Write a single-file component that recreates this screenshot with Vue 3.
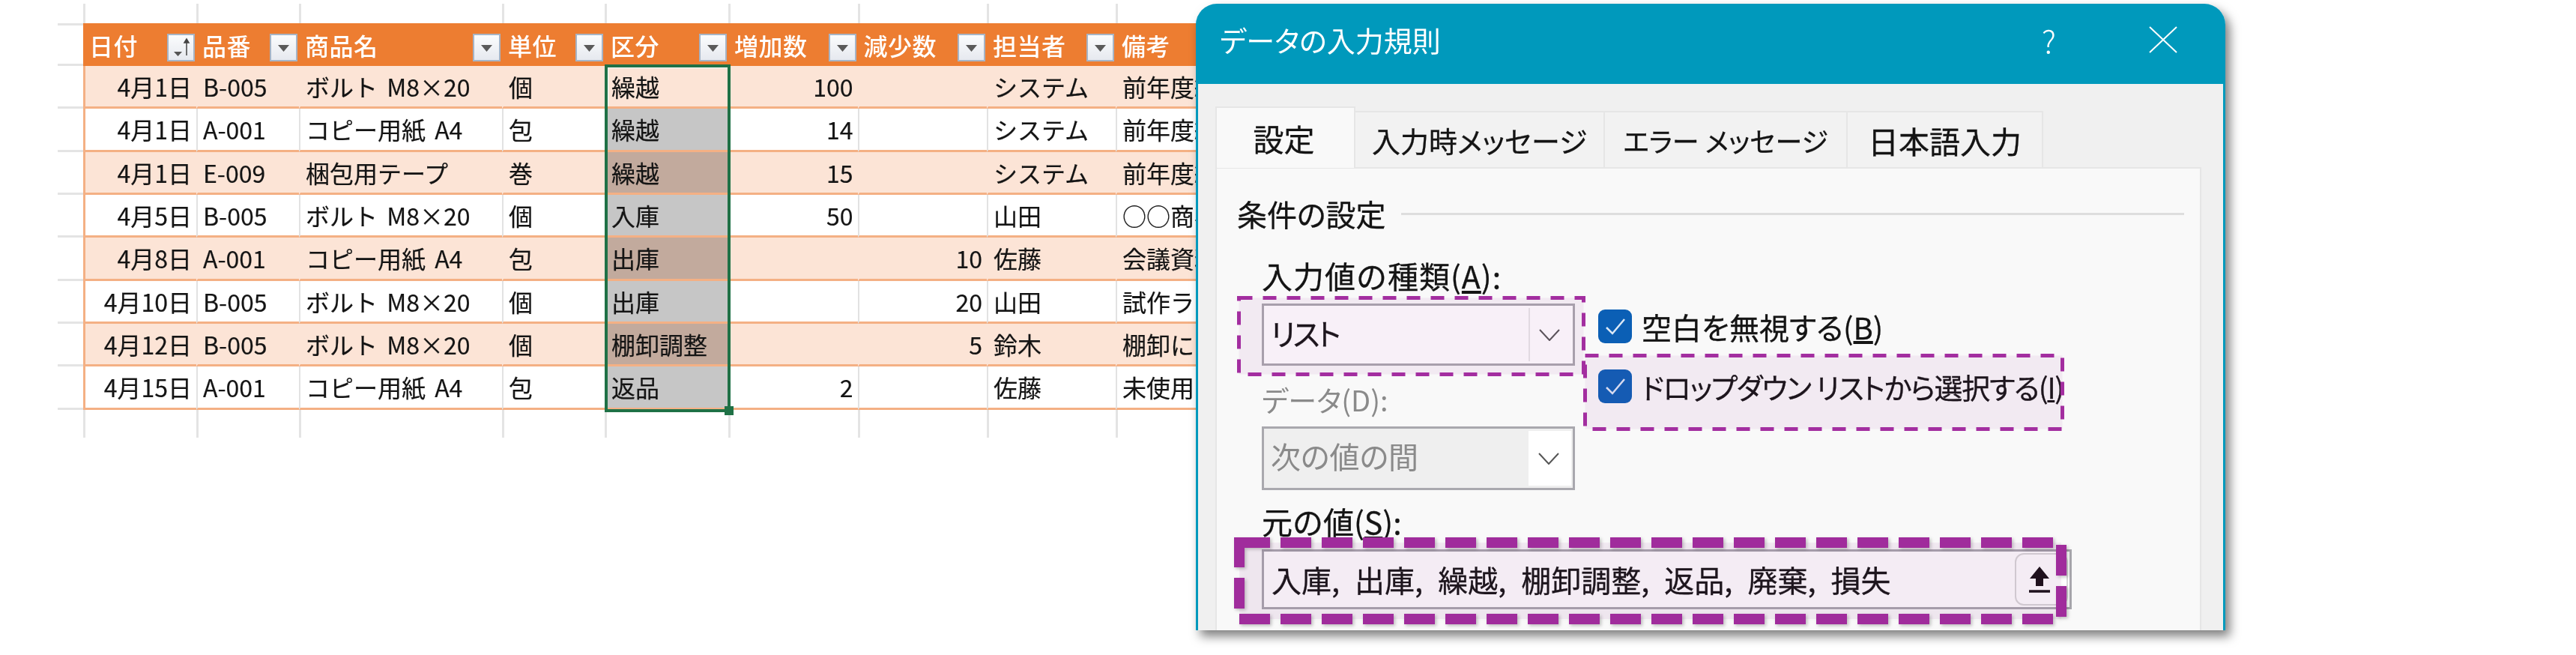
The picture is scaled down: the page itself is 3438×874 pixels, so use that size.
<template>
  <div class="page">
    <!-- シート -->
    <div class="sheet">
      <div class="grid-row stub">
        <div></div>
        <div v-for="n in 9" :key="n" class="stub-cell"></div>
      </div>

      <div class="table">
        <div class="grid-row head-row">
          <div class="row-head"></div>
          <div v-for="(h, i) in headers" :key="h" class="head-cell">
            <span>{{ h }}</span>
            <span v-if="i < 8" class="filter-btn">
              <svg v-if="i === 0" width="33" height="33" viewBox="0 0 33 33">
                <path d="M7 22h11l-5.500 6z" fill="#555" />
                <path d="M24 27V6M21 10l3-5 3 5z" stroke="#444" stroke-width="1.500" fill="#444" />
              </svg>
              <svg v-else width="33" height="33" viewBox="0 0 33 33">
                <path d="M9 13h15l-7.500 9z" fill="#5a5a5a" />
              </svg>
            </span>
          </div>
        </div>

        <div v-for="(r, i) in rows" :key="i" class="grid-row data-row" :class="{ odd: i % 2 === 0 }">
          <div class="row-head"></div>
          <div class="cell right">{{ r.date }}</div>
          <div class="cell">{{ r.code }}</div>
          <div class="cell">{{ r.name }}</div>
          <div class="cell">{{ r.unit }}</div>
          <div class="cell kubun" :class="{ active: i === 0 }">{{ r.kind }}</div>
          <div class="cell right">{{ r.inc }}</div>
          <div class="cell right">{{ r.dec }}</div>
          <div class="cell">{{ r.staff }}</div>
          <div class="cell">{{ r.note }}</div>
        </div>

        <!-- 選択範囲 -->
        <div class="selection"><i class="handle"></i></div>
      </div>

      <div class="grid-row stub bottom">
        <div></div>
        <div v-for="n in 9" :key="n" class="stub-cell"></div>
      </div>
    </div>

    <!-- ダイアログ -->
    <div class="dialog">
      <div class="title-bar">
        <span class="title">データの入力規則</span>
        <span class="help">?</span>
        <svg class="close" width="38" height="36" viewBox="0 0 38 36">
          <path d="M1 1l36 34M37 1L1 35" stroke="#fff" stroke-width="2" fill="none" />
        </svg>
      </div>

      <div class="dlg-body">
        <div class="tabs">
          <div class="tab active">設定</div>
          <div class="tab t2">入力時メッセージ</div>
          <div class="tab t3">エラー メッセージ</div>
          <div class="tab t4">日本語入力</div>
        </div>

        <div class="panel">
          <div class="legend"><span>条件の設定</span><i></i></div>

          <div class="cond">
            <div class="columns">
              <div class="left-col">
                <div class="label wide">入力値の種類(<u>A</u>):</div>
                <div class="combo first">
                  <span class="combo-text list-text">リスト</span>
                  <span class="combo-arrow">
                    <svg width="28" height="16" viewBox="0 0 28 16"><path d="M1 1l13 14L27 1" stroke="#555" stroke-width="2" fill="none" /></svg>
                  </span>
                  <svg class="mark" width="465" height="107" viewBox="0 0 465 107">
                    <rect x="2.500" y="2.500" width="460" height="102" class="mark-thin" />
                  </svg>
                </div>

                <div class="label gray data-label">データ(D):</div>
                <div class="combo disabled">
                  <span class="combo-text">次の値の間</span>
                  <span class="combo-arrow">
                    <svg width="28" height="16" viewBox="0 0 28 16"><path d="M1 1l13 14L27 1" stroke="#555" stroke-width="2" fill="none" /></svg>
                  </span>
                </div>
              </div>

              <div class="right-col">
                <label class="check first-check">
                  <span class="box"><svg width="28" height="24" viewBox="0 0 28 24"><path d="M2 13l8 8L26 2" stroke="#dbe8f6" stroke-width="2.500" fill="none" /></svg></span>
                  <span>空白を無視する(<u>B</u>)</span>
                </label>
                <label class="check second-check">
                  <span class="box"><svg width="28" height="24" viewBox="0 0 28 24"><path d="M2 13l8 8L26 2" stroke="#dbe8f6" stroke-width="2.500" fill="none" /></svg></span>
                  <span>ドロップダウン リストから選択する(<u>I</u>)</span>
                  <svg class="mark" width="642" height="103" viewBox="0 0 642 103">
                    <rect x="2.500" y="2.500" width="637" height="98" class="mark-thin" />
                  </svg>
                </label>
              </div>
            </div>

            <div class="label source-label">元の値(<u>S</u>):</div>
            <div class="source">
              <span class="source-text">入庫, 出庫, 繰越, 棚卸調整, 返品, 廃棄, 損失</span>
              <span class="ref-btn">
                <svg width="30" height="36" viewBox="0 0 30 36">
                  <path d="M15 1L28 17H20V27H10V17H2z" fill="#161014" />
                  <path d="M1 34h28" stroke="#161014" stroke-width="3.500" />
                </svg>
              </span>
              <svg class="mark thick" width="1111" height="116" viewBox="0 0 1111 116">
                <rect x="7" y="7" width="1097" height="102" class="mark-thick" />
              </svg>
            </div>
          </div>
        </div>
      </div>
    </div>
  </div>
</template>

<script setup>
const headers = ['日付', '品番', '商品名', '単位', '区分', '増加数', '減少数', '担当者', '備考']

const rows = [
  { date: '4月1日', code: 'B-005', name: 'ボルト M8×20', unit: '個', kind: '繰越', inc: '100', dec: '', staff: 'システム', note: '前年度繰越' },
  { date: '4月1日', code: 'A-001', name: 'コピー用紙 A4', unit: '包', kind: '繰越', inc: '14', dec: '', staff: 'システム', note: '前年度繰越' },
  { date: '4月1日', code: 'E-009', name: '梱包用テープ', unit: '巻', kind: '繰越', inc: '15', dec: '', staff: 'システム', note: '前年度繰越' },
  { date: '4月5日', code: 'B-005', name: 'ボルト M8×20', unit: '個', kind: '入庫', inc: '50', dec: '', staff: '山田', note: '○○商事' },
  { date: '4月8日', code: 'A-001', name: 'コピー用紙 A4', unit: '包', kind: '出庫', inc: '', dec: '10', staff: '佐藤', note: '会議資料' },
  { date: '4月10日', code: 'B-005', name: 'ボルト M8×20', unit: '個', kind: '出庫', inc: '', dec: '20', staff: '山田', note: '試作ライン' },
  { date: '4月12日', code: 'B-005', name: 'ボルト M8×20', unit: '個', kind: '棚卸調整', inc: '', dec: '5', staff: '鈴木', note: '棚卸により' },
  { date: '4月15日', code: 'A-001', name: 'コピー用紙 A4', unit: '包', kind: '返品', inc: '2', dec: '', staff: '佐藤', note: '未使用品' }
]
</script>

<style>
html,
body {
  margin: 0;
  background: #fff;
}
</style>

<style scoped>
* {
  box-sizing: border-box;
}

.page {
  position: relative;
  width: 3438px;
  height: 874px;
  overflow: hidden;
  background: #fff;
  color: #141414;
  font-family: 'Noto Sans CJK JP', 'Noto Sans', sans-serif;
  filter: blur(0.5px);
}

/* シート */
.sheet {
  padding: 5px 0 0 77px;
}

.grid-row {
  display: grid;
  grid-template-columns: 34px 151px 137px 271px 137px 165px 172.5px 172.5px 172px 300px;
}

.stub {
  height: 26px;
}

.stub.bottom {
  height: 37px;
}

.stub-cell {
  border-left: 3px solid #e4e4e4;
}

.table {
  position: relative;
}

.row-head {
  border-bottom: 3px solid #e4e4e4;
}

.head-row {
  height: 57px;
}

.head-row .row-head {
  border-top: 3px solid #e4e4e4;
}

.head-cell {
  display: flex;
  align-items: center;
  justify-content: space-between;
  padding: 0 2px 0 8px;
  background: #ed7d31;
  color: #fff;
  font-size: 32px;
  font-weight: 500;
  letter-spacing: 0.5px;
  white-space: nowrap;
  overflow: hidden;
}

.filter-btn {
  display: flex;
  align-items: center;
  justify-content: center;
  width: 37px;
  height: 37px;
  margin-top: 8px;
  background: linear-gradient(#fbfcfd, #e6e9ef);
  border: 2px solid #a6b4c6;
}

.data-row {
  height: 57.33px;
}

.cell {
  display: flex;
  align-items: center;
  padding: 0 6px 0 7px;
  font-size: 32px;
  line-height: 1;
  word-spacing: 5px;
  -webkit-text-stroke: 0.2px;
  white-space: nowrap;
  overflow: hidden;
  border-left: 2px solid #e2e2e2;
  border-bottom: 3px solid #f4b084;
  background: #fff;
}

.cell.right {
  justify-content: flex-end;
}

.cell:nth-child(2) {
  border-left: 3px solid #f4b084;
}

.odd .cell {
  background: #fce4d6;
  border-left-color: #fce4d6;
}

.odd .cell:nth-child(2) {
  border-left-color: #f4b084;
}

.cell.kubun {
  background: #c6c6c6;
}

.odd .cell.kubun {
  background: #c2aa9d;
}

.odd .cell.kubun.active {
  background: #fce4d6;
  box-shadow: inset 3px 3px 0 #fff;
}

.selection {
  position: absolute;
  left: 730px;
  top: 55px;
  width: 168px;
  height: 464px;
  border: 4px solid #1f7146;
  pointer-events: none;
}

.handle {
  position: absolute;
  right: -8px;
  bottom: -8px;
  width: 12px;
  height: 12px;
  background: #1f7146;
}

/* ダイアログ */
.dialog {
  position: absolute;
  left: 1596px;
  top: 5px;
  width: 1374px;
  height: 836px;
  display: flex;
  flex-direction: column;
  border-radius: 28px 28px 0 0;
  box-shadow: 6px 8px 14px rgba(0, 0, 0, 0.5);
  font-feature-settings: 'palt';
  -webkit-text-stroke: 0.3px;
}

.title-bar {
  display: flex;
  align-items: center;
  height: 107px;
  padding: 0 64px 12px 32px;
  background: #0099bc;
  border-radius: 28px 28px 0 0;
  color: #fff;
}

.title {
  flex: 1;
  font-size: 38px;
  font-weight: 400;
  -webkit-text-stroke: 0;
}

.help {
  margin-right: 124px;
  font-size: 42px;
  font-weight: 300;
  -webkit-text-stroke: 0;
}

.dlg-body {
  flex: 1;
  display: flex;
  flex-direction: column;
  padding-top: 30px;
  background: #f0f0f0;
  border-left: 3px solid #0099bc;
  border-right: 3px solid #0099bc;
}

.tabs {
  display: flex;
  align-items: flex-end;
  height: 81px;
  padding-left: 23px;
}

.tab {
  display: flex;
  align-items: center;
  justify-content: center;
  height: 75px;
  background: #f2f2f2;
  border: 2px solid #e6e6e6;
  border-bottom: none;
  border-left: none;
  font-size: 38px;
  white-space: nowrap;
}

.tab.active {
  width: 187px;
  height: 82px;
  margin-bottom: -1px;
  padding-right: 4px;
  background: #f9f9f9;
  border-left: 2px solid #e6e6e6;
  position: relative;
  z-index: 1;
  font-size: 41px;
}

.t2 {
  width: 333px;
}

.t3 {
  width: 324px;
  font-size: 36px;
}

.t4 {
  width: 261px;
  font-size: 41px;
}

.panel {
  flex: 1;
  width: 1316px;
  margin-left: 23px;
  padding: 40px 0 0 27px;
  background: #f9f9f9;
  border: 2px solid #e6e6e6;
  border-bottom: none;
}

.legend {
  display: flex;
  align-items: center;
  gap: 20px;
  height: 40px;
  margin-right: 21px;
  font-size: 40px;
}

.legend i {
  flex: 1;
  height: 3px;
  background: #dedede;
}

.cond {
  margin-left: 33px;
  margin-top: 40px;
}

.columns {
  display: flex;
  gap: 31px;
}

.left-col {
  width: 418px;
}

.label {
  height: 45px;
  font-size: 38px;
  line-height: 45px;
  white-space: nowrap;
}

.label.wide {
  font-size: 41px;
  letter-spacing: 1px;
  font-feature-settings: normal;
}

.label.gray {
  color: #8a8a8a;
  -webkit-text-stroke: 0;
}

.data-label {
  margin-top: 22px;
}

.source-label {
  margin-top: 19px;
  font-size: 41px;
  font-feature-settings: normal;
}

.combo {
  position: relative;
  display: flex;
  height: 83px;
  margin-top: 15px;
  background: #fff;
  border: 3px solid #a9a8ae;
}

.combo.disabled {
  height: 85px;
  margin-top: 14px;
  background: #efefef;
}

.combo-text {
  flex: 1;
  padding-left: 9px;
  font-size: 40px;
  line-height: 72px;
}

.list-text {
  letter-spacing: -3px;
}

.disabled .combo-text {
  color: #8a8a8a;
  -webkit-text-stroke: 0;
}

.combo-arrow {
  display: flex;
  align-items: center;
  justify-content: center;
  width: 57px;
  margin: 3px 2px;
  padding-right: 4px;
  background: #fff;
}

.first .combo-arrow {
  border-left: 2px solid #e8e8e8;
}

.right-col {
  padding-top: 68px;
}

.check {
  position: relative;
  display: flex;
  align-items: center;
  gap: 13px;
  height: 45px;
  font-size: 40px;
  white-space: nowrap;
}

.second-check {
  margin-top: 35px;
  font-size: 38px;
  letter-spacing: -1.3px;
}

.box {
  display: flex;
  align-items: center;
  justify-content: center;
  flex: none;
  width: 45px;
  height: 45px;
  background: #0b5fb5;
  border-radius: 9px;
}

.source {
  position: relative;
  display: flex;
  align-items: center;
  width: 1081px;
  height: 80px;
  margin-top: 15px;
  background: #fff;
  border: 3px solid #a9a8ae;
  font-size: 40px;
  font-feature-settings: normal;
}

.source-text {
  flex: 1;
  padding-left: 10px;
  word-spacing: 11px;
  white-space: nowrap;
}

.ref-btn {
  display: flex;
  align-items: center;
  justify-content: center;
  width: 71px;
  height: 70px;
  margin-right: 2px;
  border: 2px solid #d8d8d8;
  border-radius: 12px;
  padding-right: 6px;
}

/* 強調枠 */
.mark {
  position: absolute;
  pointer-events: none;
}

.first .mark {
  left: -36px;
  top: -13px;
}

.second-check .mark {
  left: -20px;
  top: -21px;
}

.mark.thick {
  left: -40px;
  top: -19px;
  filter: drop-shadow(2px 2px 2px rgba(0, 0, 0, 0.25));
}

.mark-thin,
.mark-thick {
  fill: rgba(160, 44, 156, 0.07);
  stroke: #a32ea0;
  -webkit-text-stroke: 0;
}

.mark-thin {
  stroke-width: 5;
  stroke-dasharray: 18 14;
}

.mark-thick {
  stroke: #a02c9c;
  stroke-width: 14;
  stroke-dasharray: 41 14;
}
</style>
